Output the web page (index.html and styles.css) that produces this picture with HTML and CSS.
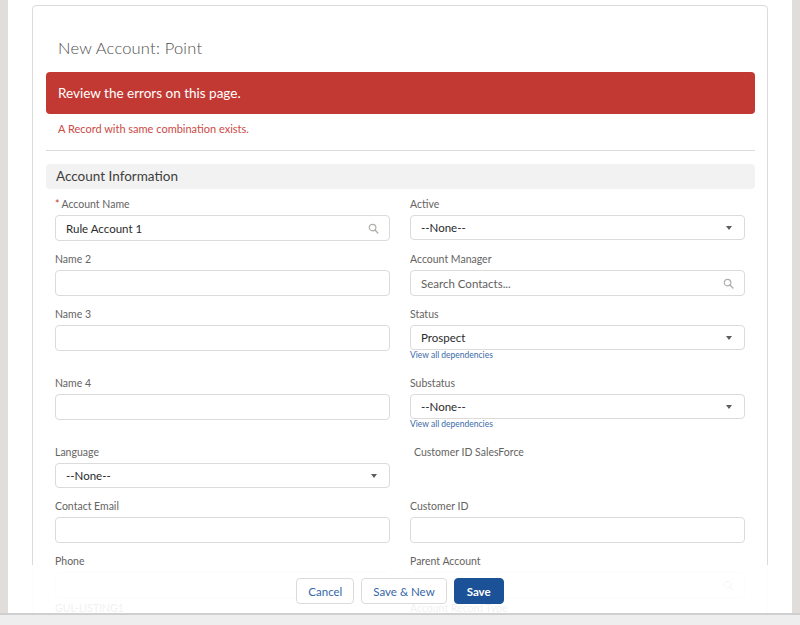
FILE: index.html
```html
<!DOCTYPE html>
<html>
<head>
<meta charset="utf-8">
<link rel="stylesheet" href="styles.css">
</head>
<body>
<div class="modal">
  <div class="card">
    <h1 class="title">New Account: Point</h1>
    <div class="banner">Review the errors on this page.</div>
    <div class="err">A Record with same combination exists.</div>
    <div class="divider"></div>
    <div class="section">Account Information</div>
    <div class="grid">
      <div class="field">
        <div class="label"><span class="req">*</span>Account Name</div>
        <div class="input"><span class="val">Rule Account 1</span>
          <svg class="search" viewBox="0 0 12 12" width="11" height="11"><circle cx="5" cy="5" r="3.6" fill="none" stroke="#b0adab" stroke-width="1.3"/><line x1="7.6" y1="7.6" x2="10.8" y2="10.8" stroke="#b0adab" stroke-width="1.5" stroke-linecap="round"/></svg>
        </div>
      </div>
      <div class="field">
        <div class="label">Active</div>
        <div class="input select"><span class="val">--None--</span><span class="arrow"></span></div>
      </div>

      <div class="field">
        <div class="label">Name 2</div>
        <div class="input"></div>
      </div>
      <div class="field">
        <div class="label">Account Manager</div>
        <div class="input"><span class="ph">Search Contacts...</span>
          <svg class="search" viewBox="0 0 12 12" width="11" height="11"><circle cx="5" cy="5" r="3.6" fill="none" stroke="#b0adab" stroke-width="1.3"/><line x1="7.6" y1="7.6" x2="10.8" y2="10.8" stroke="#b0adab" stroke-width="1.5" stroke-linecap="round"/></svg>
        </div>
      </div>

      <div class="field">
        <div class="label">Name 3</div>
        <div class="input"></div>
      </div>
      <div class="field">
        <div class="label">Status</div>
        <div class="input select"><span class="val">Prospect</span><span class="arrow"></span></div>
        <div class="dep">View all dependencies</div>
      </div>

      <div class="field">
        <div class="label">Name 4</div>
        <div class="input"></div>
      </div>
      <div class="field">
        <div class="label">Substatus</div>
        <div class="input select"><span class="val">--None--</span><span class="arrow"></span></div>
        <div class="dep">View all dependencies</div>
      </div>

      <div class="field">
        <div class="label">Language</div>
        <div class="input select"><span class="val">--None--</span><span class="arrow"></span></div>
      </div>
      <div class="field">
        <div class="label out">Customer ID SalesForce</div>
      </div>

      <div class="field">
        <div class="label">Contact Email</div>
        <div class="input"></div>
      </div>
      <div class="field">
        <div class="label">Customer ID</div>
        <div class="input"></div>
      </div>

      <div class="field short">
        <div class="label">Phone</div>
        <div class="input"></div>
      </div>
      <div class="field short">
        <div class="label">Parent Account</div>
        <div class="input">
          <svg class="search" viewBox="0 0 12 12" width="11" height="11"><circle cx="5" cy="5" r="3.6" fill="none" stroke="#b0adab" stroke-width="1.3"/><line x1="7.6" y1="7.6" x2="10.8" y2="10.8" stroke="#b0adab" stroke-width="1.5" stroke-linecap="round"/></svg>
        </div>
      </div>

      <div class="field">
        <div class="label tiny">GUL-LISTING1</div>
      </div>
      <div class="field">
        <div class="label tiny">Account Record Type</div>
      </div>
    </div>
  </div>
  <div class="footer">
    <button class="btn">Cancel</button>
    <button class="btn">Save &amp; New</button>
    <button class="btn brand">Save</button>
  </div>
</div>
<div class="bottom"></div>
</body>
</html>
```
FILE: styles.css
```css
html, body {
  margin: 0;
  padding: 0;
}
body {
  background: #e0ddda;
  font-family: Lato, "Open Sans", sans-serif;
  color: #3e3e3c;
  width: 800px;
  height: 625px;
  overflow: hidden;
}
.modal {
  position: relative;
  margin: 0 8px;
  height: 613px;
  background: #ffffff;
  overflow: hidden;
  padding-top: 5px;
  box-sizing: border-box;
}
.card {
  margin: 0 24px;
  border: 1px solid #dddbda;
  border-radius: 4px;
  padding: 0 12px 0 13px;
  background: #fff;
  height: 700px;
}
.title {
  margin: 30px 0 12px 12px;
  font-size: 16.5px;
  line-height: 24px;
  font-weight: 300;
  color: #4f4e4c;
  letter-spacing: 0.2px;
}
.banner {
  height: 42px;
  line-height: 42px;
  background: #c23934;
  border-radius: 4px;
  color: #fff;
  font-size: 13.5px;
  padding-left: 12px;
}
.err {
  margin-top: 7px;
  line-height: 16px;
  font-size: 11px;
  color: #cc4a45;
  padding-left: 12px;
}
.divider {
  margin-top: 13px;
  border-top: 1px solid #dddbda;
}
.section {
  margin-top: 13px;
  height: 25px;
  line-height: 25px;
  background: #f3f2f2;
  border-radius: 4px;
  padding-left: 10px;
  font-size: 13.5px;
  color: #3e3e3c;
}
.grid {
  margin-top: 7px;
  padding: 0 10px 0 9px;
  display: grid;
  grid-template-columns: 1fr 1fr;
  column-gap: 20px;
  align-items: start;
}
.field {
  padding-bottom: 10px;
}
.field.short {
  padding-bottom: 4px;
}
.label {
  font-size: 10.5px;
  line-height: 16px;
  color: #66645f;
  margin-bottom: 3px;
}
.label.tiny {
  line-height: 12px;
}
.label.out {
  padding-left: 4px;
  padding-bottom: 25px;
}
.req {
  color: #c23934;
  margin-right: 2px;
}
.input {
  height: 26px;
  box-sizing: border-box;
  border: 1px solid #dddbda;
  border-radius: 4px;
  display: flex;
  align-items: center;
  padding: 0 10px 0 10px;
  font-size: 11.5px;
  color: #16325c;
}
.input.select {
  height: 25px;
}
.val {
  color: #2b2b2b;
  flex: 1;
}
.ph {
  color: #62605d;
  flex: 1;
}
.search {
  margin-left: auto;
}
.arrow {
  margin-left: auto;
  margin-right: 2px;
  width: 0;
  height: 0;
  border-left: 3.5px solid transparent;
  border-right: 3.5px solid transparent;
  border-top: 4px solid #5f5d5a;
}
.dep {
  font-size: 8.5px;
  line-height: 11px;
  color: #3a6aa8;
  margin-bottom: 4px;
}
.footer {
  position: absolute;
  left: 0;
  right: 0;
  bottom: 0;
  height: 48px;
  background: rgba(255, 255, 255, 0.9);
  display: flex;
  justify-content: center;
  align-items: flex-start;
  padding-top: 13px;
  box-sizing: border-box;
  gap: 7px;
}
.btn {
  height: 26px;
  padding: 0 11px;
  border: 1px solid #dddbda;
  border-radius: 4px;
  background: #fff;
  color: #3567a8;
  font-family: Lato, "Open Sans", sans-serif;
  font-size: 11.5px;
  cursor: pointer;
}
.btn.brand {
  background: #1b5297;
  border-color: #1b5297;
  color: #fff;
  font-weight: 700;
  padding: 0 12px;
}
.bottom {
  height: 12px;
  background: #eeeeee;
  border-top: 2px solid #cfcfcf;
  box-sizing: border-box;
}
```
